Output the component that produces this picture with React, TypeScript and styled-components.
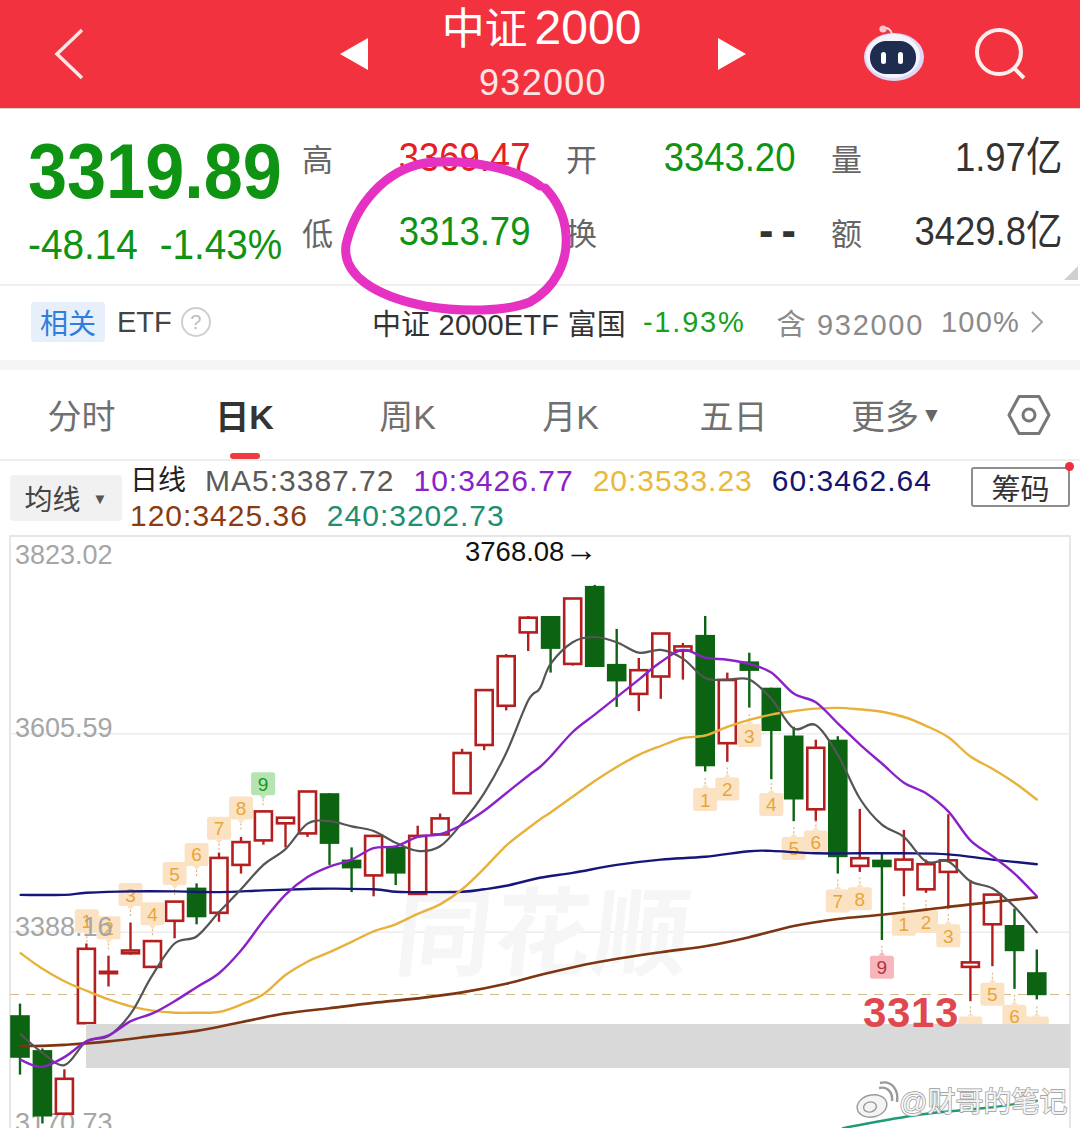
import React from 'react';
import styled, { createGlobalStyle } from 'styled-components';

const FONT = `"Liberation Sans", "Noto Sans CJK SC", sans-serif`;

const GlobalStyle = createGlobalStyle`
  html, body {
    margin: 0;
    padding: 0;
    background: #fff;
    font-family: ${FONT};
  }
  body {
    width: 1080px;
    height: 1128px;
    overflow: hidden;
  }
`;

const Page = styled.div`
  position: relative;
  width: 1080px;
  height: 1128px;
  overflow: hidden;
  background: #fff;
`;

/* header */
const Header = styled.header`
  height: 108px;
  background: #f2323e;
  border-bottom: 1px solid #d9d0d0;
  display: grid;
  grid-template-columns: 1fr auto 1fr;
  align-items: center;
  color: #fff;
`;

const BackSlot = styled.div`
  padding-left: 54px;
  display: flex;
  align-items: center;
`;

const TitleGroup = styled.div`
  width: 406px;
  height: 108px;
  margin-left: 6px;
  display: flex;
  align-items: center;
  justify-content: space-between;
`;

const TitleText = styled.div`
  align-self: flex-start;
  display: flex;
  flex-direction: column;
  align-items: center;
`;

const Title = styled.div`
  font-size: 43px;
  line-height: 56px;
  word-spacing: -5px;
  margin-left: -3px;
`;

const TitleNum = styled.span`
  font-size: 48px;
`;

const Code = styled.div`
  font-size: 36px;
  line-height: 40px;
  margin-top: 6px;
  letter-spacing: 1.3px;
  color: #fde4e4;
`;

const HeaderIcons = styled.div`
  display: flex;
  justify-content: flex-end;
  align-items: center;
  gap: 49px;
  padding-right: 52px;
`;

/* quote panel */
const QuotePanel = styled.section`
  position: relative;
  height: 177px;
  padding-left: 28px;
  display: flex;
  border-bottom: 2px solid #efefef;
  box-sizing: border-box;
`;

const PriceBlock = styled.div`
  width: 274px;
  flex: none;
  color: #0f9313;
  padding-top: 18px;
`;

const Num = styled.span<{ $size: number; $origin?: string; $bold?: boolean; $color?: string }>`
  display: inline-block;
  font-size: ${p => p.$size}px;
  line-height: 1;
  font-weight: ${p => (p.$bold ? 700 : 400)};
  color: ${p => p.$color || 'inherit'};
  transform: scaleX(0.9);
  transform-origin: ${p => p.$origin || 'right'} center;
  white-space: nowrap;
`;

const Dashes = styled(Num)`
  font-weight: 700;
  letter-spacing: 9px;
  margin-right: -9px;
`;

const BigPrice = styled.div`
  height: 88px;
  display: flex;
  align-items: center;
`;

const Change = styled.div`
  display: grid;
  grid-template-columns: 110px 144px;
  justify-items: start;
  margin-top: 8px;
  & > :last-child {
    justify-self: end;
  }
`;

const StatGrid = styled.div`
  display: grid;
  grid-template-columns: 228px 229px 231px;
  column-gap: 36px;
  grid-auto-rows: 74px;
  padding-top: 11px;
`;

const Stat = styled.div`
  display: flex;
  align-items: center;
  justify-content: space-between;
`;

const StatLabel = styled.span`
  font-size: 31px;
  color: #666;
`;

const Corner = styled.div`
  position: absolute;
  right: 2px;
  bottom: 4px;
  width: 0;
  height: 0;
  border-left: 14px solid transparent;
  border-bottom: 14px solid #cfcfcf;
`;

const Scribble = styled.svg`
  position: absolute;
  left: 0;
  top: 0;
  pointer-events: none;
`;

/* related etf */
const EtfRow = styled.section`
  height: 84px;
  box-sizing: border-box;
  padding: 0 36px 2px 31px;
  display: flex;
  align-items: center;
  justify-content: space-between;
  font-size: 29px;
  border-bottom: 10px solid #f5f5f5;
`;

const EtfLeft = styled.div`
  display: flex;
  align-items: center;
  color: #444;
`;

const Tag = styled.span`
  width: 74px;
  height: 40px;
  background: #e7effa;
  border-radius: 3px;
  color: #2f7de1;
  font-size: 28px;
  display: flex;
  align-items: center;
  justify-content: center;
  margin-right: 12px;
`;

const Help = styled.span`
  width: 26px;
  height: 26px;
  margin-left: 9px;
  border-radius: 50%;
  border: 2px solid #cfcfcf;
  color: #bdbdbd;
  font-size: 20px;
  display: flex;
  align-items: center;
  justify-content: center;
`;

const EtfRight = styled.div`
  display: flex;
  align-items: center;
`;

const EtfName = styled.span`
  color: #333;
  margin-right: 17px;
  letter-spacing: 0.2px;
`;

const EtfPct = styled.span`
  color: #16a01c;
  margin-right: 31px;
  letter-spacing: 1.8px;
`;

const EtfMeta = styled.span<{ $gap?: number; $spacing: number }>`
  color: #8a8a8a;
  letter-spacing: ${p => p.$spacing}px;
  margin-left: ${p => p.$gap || 0}px;
`;

const Chevron = styled.svg`
  margin-left: 10px;
`;

/* tabs */
const Tabs = styled.nav`
  height: 91px;
  display: grid;
  grid-template-columns: repeat(6, 163px) 1fr;
  align-items: center;
  border-bottom: 2px solid #eee;
  box-sizing: border-box;
`;

const Tab = styled.div<{ $active?: boolean }>`
  position: relative;
  height: 100%;
  display: flex;
  align-items: center;
  justify-content: center;
  font-size: 34px;
  font-weight: ${p => (p.$active ? 700 : 400)};
  color: ${p => (p.$active ? '#333' : '#707070')};
  &::after {
    content: '';
    display: ${p => (p.$active ? 'block' : 'none')};
    position: absolute;
    left: 67px;
    bottom: 0;
    width: 30px;
    height: 6px;
    border-radius: 3px;
    background: #ee3b40;
  }
`;

const Caret = styled.span`
  font-size: 21px;
  margin-left: 2px;
  color: #666;
`;

const GearSlot = styled.div`
  display: flex;
  justify-content: center;
`;

/* ma row */
const MaRow = styled.section`
  position: relative;
  height: 75px;
  display: flex;
  align-items: flex-start;
  padding-left: 10px;
  box-sizing: border-box;
`;

const MaButton = styled.div`
  width: 112px;
  height: 46px;
  margin-top: 14px;
  flex: none;
  background: #f1f1f1;
  border-radius: 4px;
  font-size: 28px;
  color: #444;
  display: flex;
  align-items: center;
  justify-content: center;
  gap: 12px;
`;

const MaCaret = styled.span`
  font-size: 15px;
  color: #555;
`;

const MaText = styled.div`
  width: 826px;
  margin-left: 8px;
  padding-top: 2px;
  display: flex;
  flex-wrap: wrap;
  column-gap: 19px;
  font-size: 30px;
  line-height: 35px;
  letter-spacing: 1px;
`;

const MaItem = styled.span<{ $color: string }>`
  color: ${p => p.$color};
  white-space: nowrap;
`;

const MaLabel = styled(MaItem)`
  font-size: 28px;
  letter-spacing: 0;
`;

const ChipButton = styled.div`
  position: relative;
  width: 99px;
  height: 40px;
  margin-top: 6px;
  margin-left: 15px;
  box-sizing: border-box;
  border: 2px solid #8d8d8d;
  border-radius: 3px;
  font-size: 29px;
  color: #333;
  display: flex;
  align-items: center;
  justify-content: center;
  &::after {
    content: '';
    position: absolute;
    right: -6px;
    top: -7px;
    width: 9px;
    height: 9px;
    border-radius: 50%;
    background: #ee2f3d;
  }
`;

/* chart */
const ChartWrap = styled.section`
  height: 592px;
`;

const ChartSvg = styled.svg`
  display: block;
  overflow: visible;
  font-family: ${FONT};
`;

const AxisLabel = styled.text`
  font-size: 27px;
  fill: #a6a6a6;
`;

const MarkerText = styled.text<{ $color: string }>`
  font-size: 19px;
  text-anchor: middle;
  fill: ${p => p.$color};
`;

const Watermark = styled.text`
  font-size: 96px;
  font-weight: 700;
  fill: #f6f6f6;
  letter-spacing: 3px;
`;

const LowNote = styled.text`
  font-size: 42px;
  font-weight: 700;
  fill: #e0484f;
  letter-spacing: 0.6px;
`;

const PeakNote = styled.text`
  font-size: 27.5px;
  fill: #111;
`;

const PeakArrow = styled.tspan`
  font-size: 33px;
`;

const Credit = styled.text`
  font-size: 28px;
  fill: #f4f4f4;
  stroke: #9a9a9a;
  stroke-width: 1.4px;
  paint-order: stroke;
`;

/* reference chart units: half of the plot is 1568 wide */
const HALF = 1568;
const px = (x: number) => +(x / 2.904).toFixed(1);
const py = (y: number) => +(44 + y / 2.861).toFixed(1);

type Candle = [number, number, number, number, number, 'r' | 'g'];

const leftCandles: Candle[] = [
  [58, 1212, 1415, 1245, 1367, 'g'],
  [123, 1340, 1555, 1345, 1535, 'g'],
  [187, 1400, 1530, 1427, 1527, 'r'],
  [251, 1040, 1268, 1055, 1268, 'r'],
  [315, 1075, 1163, 1121, 1125, 'r'],
  [379, 980, 1072, 1060, 1068, 'r'],
  [443, 1033, 1110, 1033, 1107, 'r'],
  [507, 920, 1025, 920, 975, 'r'],
  [571, 868, 985, 880, 965, 'g'],
  [636, 780, 978, 795, 952, 'r'],
  [700, 735, 840, 750, 815, 'r'],
  [765, 660, 757, 662, 745, 'r'],
  [829, 680, 765, 680, 696, 'r'],
  [893, 605, 735, 605, 725, 'r'],
  [957, 610, 815, 610, 755, 'g'],
  [1021, 765, 893, 800, 825, 'g'],
  [1085, 732, 905, 732, 845, 'r'],
  [1149, 763, 873, 763, 840, 'g'],
  [1213, 703, 898, 732, 898, 'r'],
  [1278, 668, 728, 682, 728, 'r'],
  [1342, 483, 610, 495, 610, 'r'],
  [1406, 315, 487, 315, 472, 'r'],
  [1470, 212, 373, 218, 360, 'r'],
  [1534, 103, 203, 108, 150, 'r'],
];

const rightCandles: Candle[] = [
  [31, 103, 265, 103, 197, 'g'],
  [95, 53, 245, 53, 240, 'r'],
  [159, 14, 249, 17, 249, 'g'],
  [223, 140, 363, 240, 290, 'g'],
  [287, 223, 375, 258, 326, 'r'],
  [351, 153, 340, 153, 276, 'r'],
  [415, 180, 285, 190, 202, 'r'],
  [480, 103, 548, 157, 533, 'g'],
  [544, 265, 520, 286, 467, 'r'],
  [608, 208, 365, 233, 260, 'g'],
  [672, 308, 570, 308, 432, 'g'],
  [737, 420, 690, 445, 628, 'g'],
  [801, 457, 690, 480, 656, 'r'],
  [865, 447, 840, 457, 793, 'g'],
  [929, 655, 835, 796, 818, 'r'],
  [993, 780, 1030, 800, 822, 'g'],
  [1057, 715, 905, 800, 828, 'r'],
  [1121, 800, 895, 813, 885, 'r'],
  [1186, 670, 940, 802, 835, 'r'],
  [1250, 858, 1205, 1094, 1107, 'r'],
  [1314, 900, 1105, 900, 985, 'r'],
  [1378, 940, 1170, 987, 1062, 'g'],
  [1443, 1057, 1200, 1122, 1188, 'g'],
];

const candles: Candle[] = [
  ...leftCandles,
  ...rightCandles.map(([x, ...rest]) => [x + HALF, ...rest] as Candle),
];

type Pt = [number, number];
const joinHalves = (left: Pt[], right: Pt[]): Pt[] => [
  ...left,
  ...right.map(([x, y]) => [x + HALF, y] as Pt),
];

const ma5 = joinHalves(
  [[60, 1300], [120, 1350], [187, 1388], [251, 1320], [315, 1305], [380, 1240], [440, 1135], [507, 1040], [571, 1020], [636, 950], [700, 885], [765, 815], [829, 770], [893, 697], [957, 690], [1021, 705], [1085, 718], [1149, 752], [1213, 775], [1278, 762], [1342, 695], [1406, 610], [1470, 495], [1534, 345], [1568, 310]],
  [[31, 240], [95, 178], [159, 163], [223, 178], [287, 208], [351, 200], [415, 225], [480, 280], [544, 285], [608, 285], [672, 340], [737, 425], [801, 415], [865, 500], [929, 625], [993, 700], [1057, 735], [1121, 805], [1186, 805], [1250, 862], [1314, 882], [1378, 935], [1443, 1008]],
);

const ma10 = joinHalves(
  [[60, 1373], [120, 1393], [187, 1365], [251, 1320], [315, 1303], [380, 1262], [443, 1240], [507, 1205], [571, 1165], [636, 1125], [700, 1060], [765, 975], [829, 900], [893, 850], [957, 820], [1021, 800], [1085, 767], [1149, 762], [1213, 735], [1278, 727], [1342, 700], [1406, 660], [1470, 610], [1534, 560], [1568, 535]],
  [[31, 505], [95, 435], [159, 385], [223, 335], [287, 285], [351, 235], [415, 200], [480, 222], [544, 228], [608, 240], [672, 265], [737, 325], [801, 350], [865, 410], [929, 470], [993, 525], [1057, 580], [1121, 610], [1186, 662], [1250, 745], [1314, 790], [1378, 840], [1443, 905]],
);

const ma20 = joinHalves(
  [[60, 1068], [120, 1110], [187, 1148], [251, 1175], [315, 1200], [380, 1220], [443, 1232], [507, 1238], [571, 1238], [636, 1236], [700, 1215], [765, 1185], [829, 1130], [893, 1092], [957, 1065], [1021, 1035], [1085, 1005], [1149, 985], [1213, 955], [1278, 928], [1342, 885], [1406, 825], [1470, 760], [1534, 710], [1568, 685]],
  [[31, 665], [95, 620], [159, 575], [223, 535], [287, 500], [351, 475], [415, 452], [480, 445], [544, 420], [608, 400], [672, 385], [737, 375], [801, 368], [865, 366], [929, 370], [993, 377], [1057, 392], [1121, 417], [1186, 450], [1250, 505], [1314, 540], [1378, 580], [1443, 628]],
);

const ma60 = joinHalves(
  [[60, 901], [187, 901], [251, 895], [380, 891], [507, 891], [636, 893], [765, 888], [893, 884], [957, 883], [1085, 885], [1149, 892], [1213, 893], [1342, 892], [1406, 885], [1470, 875], [1568, 852]],
  [[95, 838], [223, 815], [351, 800], [480, 792], [608, 776], [672, 775], [801, 782], [929, 782], [1057, 782], [1186, 785], [1314, 800], [1443, 813]],
);

const ma120 = joinHalves(
  [[60, 1333], [120, 1333], [187, 1330], [315, 1320], [443, 1305], [571, 1290], [700, 1265], [829, 1240], [957, 1225], [1085, 1210], [1213, 1197], [1342, 1180], [1470, 1155], [1568, 1130]],
  [[159, 1095], [351, 1065], [480, 1048], [608, 1022], [737, 990], [865, 970], [993, 958], [1121, 943], [1250, 928], [1443, 908]],
);

const ma240 = joinHalves([], [[880, 1568], [1100, 1530], [1300, 1510], [1443, 1490]]);

const maLines: { pts: Pt[]; color: string; width: number }[] = [
  { pts: ma60, color: '#15157a', width: 2.4 },
  { pts: ma240, color: '#1f9b79', width: 2.4 },
  { pts: ma120, color: '#7d3512', width: 2.6 },
  { pts: ma20, color: '#e8b13a', width: 2.4 },
  { pts: ma5, color: '#555', width: 2.2 },
  { pts: ma10, color: '#8a22c8', width: 2.4 },
];

type Tone = 'amber' | 'green' | 'pink';
const TONES: Record<Tone, { fill: string; text: string }> = {
  amber: { fill: '#fbe2c2', text: '#e8a63a' },
  green: { fill: '#b6e3b2', text: '#149a1c' },
  pink: { fill: '#f6b6bc', text: '#b5323c' },
};

type MarkerData = [number, number, string, 'up' | 'down', Tone?];

const markers: MarkerData[] = [
  [252, 975, '1', 'up'],
  [315, 995, '2', 'up'],
  [379, 900, '3', 'up'],
  [443, 955, '4', 'up'],
  [507, 840, '5', 'up'],
  [571, 785, '6', 'up'],
  [636, 710, '7', 'up'],
  [700, 652, '8', 'up'],
  [764, 583, '9', 'up', 'green'],
  [480 + HALF, 628, '1', 'down'],
  [544 + HALF, 598, '2', 'down'],
  [608 + HALF, 445, '3', 'down'],
  [672 + HALF, 642, '4', 'down'],
  [737 + HALF, 768, '5', 'down'],
  [801 + HALF, 750, '6', 'down'],
  [865 + HALF, 918, '7', 'down'],
  [929 + HALF, 912, '8', 'down'],
  [993 + HALF, 1108, '9', 'down', 'pink'],
  [1057 + HALF, 985, '1', 'down'],
  [1121 + HALF, 977, '2', 'down'],
  [1186 + HALF, 1018, '3', 'down'],
  [1250 + HALF, 1282, '', 'down'],
  [1314 + HALF, 1185, '5', 'down'],
  [1378 + HALF, 1248, '6', 'down'],
  [1443 + HALF, 1282, '', 'down'],
];

const CandleMark = ({ c }: { c: Candle }) => {
  const [x, high, low, top, bottom, kind] = c;
  const color = kind === 'r' ? '#b31f1f' : '#0c6412';
  const cx = px(x);
  return (
    <g>
      <line x1={cx} x2={cx} y1={py(high)} y2={py(low)} stroke={color} strokeWidth={2.4} />
      {kind === 'r' ? (
        <rect x={cx - 8.5} y={py(top)} width={17} height={Math.max(py(bottom) - py(top), 1)} fill="#fff" stroke={color} strokeWidth={2.6} />
      ) : (
        <rect x={cx - 9.8} y={py(top)} width={19.6} height={py(bottom) - py(top)} fill={color} />
      )}
    </g>
  );
};

const Marker = ({ m }: { m: MarkerData }) => {
  const [x, y, label, dir, tone = 'amber'] = m;
  const cx = px(x);
  const cy = py(y);
  const t = TONES[tone];
  const sign = dir === 'up' ? 1 : -1;
  const tip = cy + sign * 15.5;
  return (
    <g>
      <line x1={cx} x2={cx} y1={tip} y2={tip + sign * 6} stroke="#d8b98a" strokeWidth={1.2} strokeDasharray="2 2" />
      <rect x={cx - 12} y={cy - 11.5} width={24} height={23} rx={2.5} fill={t.fill} />
      <polygon points={`${cx - 3.5},${cy + sign * 11.5} ${cx + 3.5},${cy + sign * 11.5} ${cx},${tip}`} fill={t.fill} />
      <MarkerText x={cx} y={cy + 7} $color={t.text}>{label}</MarkerText>
    </g>
  );
};

// catmull-rom through the sampled points, the averages read as soft curves
const toSmoothPath = (pts: Pt[]) => {
  const p = pts.map(([x, y]) => [px(x), py(y)] as Pt);
  let d = `M${p[0][0]} ${p[0][1]}`;
  for (let i = 0; i < p.length - 1; i++) {
    const a = p[Math.max(i - 1, 0)];
    const b = p[i];
    const c = p[i + 1];
    const e = p[Math.min(i + 2, p.length - 1)];
    const c1x = +(b[0] + (c[0] - a[0]) / 6).toFixed(1);
    const c1y = +(b[1] + (c[1] - a[1]) / 6).toFixed(1);
    const c2x = +(c[0] - (e[0] - b[0]) / 6).toFixed(1);
    const c2y = +(c[1] - (e[1] - b[1]) / 6).toFixed(1);
    d += ` C${c1x} ${c1y} ${c2x} ${c2y} ${c[0]} ${c[1]}`;
  }
  return d;
};

const Chart = () => (
  <ChartWrap>
    <ChartSvg width={1080} height={592} viewBox="0 0 1080 592">
      <rect x={10} y={0} width={1060} height={600} fill="#fff" stroke="#e6e6e6" strokeWidth={2} />
      <line x1={10} x2={1070} y1={py(440)} y2={py(440)} stroke="#ececec" strokeWidth={1.5} />
      <line x1={10} x2={1070} y1={py(1008)} y2={py(1008)} stroke="#ececec" strokeWidth={1.5} />
      <Watermark x={392} y={432} transform="skewX(-6) translate(46 0)">同花顺</Watermark>
      <line x1={10} x2={1070} y1={py(1186)} y2={py(1186)} stroke="#cdbb8e" strokeWidth={1} strokeDasharray="9 7" />

      <AxisLabel x={15} y={28}>3823.02</AxisLabel>
      <AxisLabel x={15} y={201}>3605.59</AxisLabel>
      <AxisLabel x={15} y={596}>3170.73</AxisLabel>
      <PeakNote x={465} y={25}>3768.08<PeakArrow>→</PeakArrow></PeakNote>

      {candles.map((c, i) => <CandleMark key={i} c={c} />)}
      {markers.map((m, i) => <Marker key={i} m={m} />)}
      <AxisLabel x={15} y={400}>3388.16</AxisLabel>

      <rect x={86} y={488} width={984} height={44} fill="#d9d9d9" />
      <LowNote x={863} y={491}>3313</LowNote>

      {maLines.map((l, i) => (
        <path key={i} d={toSmoothPath(l.pts)} fill="none" stroke={l.color} strokeWidth={l.width} strokeLinecap="round" />
      ))}

      <g fill="#f4f4f4" stroke="#9a9a9a" strokeWidth={1.4}>
        <ellipse cx={872} cy={570} rx={15} ry={11} transform="rotate(-12 872 570)" />
        <ellipse cx={870} cy={571} rx={6.5} ry={5} transform="rotate(-12 870 571)" />
        <path d="M879 552 C887 550 893 556 892 565 M880 547 C891 544 899 553 897 566" fill="none" strokeWidth={2.4} />
      </g>
      <Credit x={899} y={576}>@财哥的笔记</Credit>
    </ChartSvg>
  </ChartWrap>
);

const Robot = () => (
  <svg width={62} height={58} viewBox="0 0 62 58">
    <path d="M20 4 C24 2 28 4 29 9" fill="none" stroke="#f7d6dc" strokeWidth={2.2} />
    <circle cx={20} cy={4} r={3.6} fill="#f9c6cf" />
    <ellipse cx={31} cy={32} rx={30} ry={24} fill="#ddd8f6" />
    <ellipse cx={30} cy={31} rx={27} ry={22} fill="#f5f3fd" />
    <rect x={7} y={16} width={46} height={33} rx={16} fill="#1e2c4f" />
    <rect x={18} y={27} width={5} height={12} rx={2.5} fill="#fff" />
    <rect x={35} y={27} width={5} height={12} rx={2.5} fill="#fff" />
  </svg>
);

const App = () => (
  <Page>
    <GlobalStyle />
    <Header>
      <BackSlot>
        <svg width={32} height={54} viewBox="0 0 32 54">
          <path d="M28 3 L3 27 L28 51" fill="none" stroke="#fbe6e6" strokeWidth={3.5} />
        </svg>
      </BackSlot>
      <TitleGroup>
        <svg width={28} height={32} viewBox="0 0 28 32"><polygon points="28,0 0,16 28,32" fill="#fff" /></svg>
        <TitleText>
          <Title>中证 <TitleNum>2000</TitleNum></Title>
          <Code>932000</Code>
        </TitleText>
        <svg width={28} height={32} viewBox="0 0 28 32"><polygon points="0,0 28,16 0,32" fill="#fff" /></svg>
      </TitleGroup>
      <HeaderIcons>
        <Robot />
        <svg width={54} height={54} viewBox="0 0 54 54">
          <circle cx={25} cy={25} r={22} fill="none" stroke="#fdeeee" strokeWidth={4} />
          <path d="M40 41 L50 51" stroke="#fdeeee" strokeWidth={4} />
        </svg>
      </HeaderIcons>
    </Header>

    <QuotePanel>
      <PriceBlock>
        <BigPrice><Num $size={78} $bold $origin="left">3319.89</Num></BigPrice>
        <Change>
          <Num $size={43} $origin="left">-48.14</Num>
          <Num $size={43}>-1.43%</Num>
        </Change>
      </PriceBlock>
      <StatGrid>
        <Stat><StatLabel>高</StatLabel><Num $size={40.5} $color="#e5201f">3369.47</Num></Stat>
        <Stat><StatLabel>开</StatLabel><Num $size={40.5} $color="#0f9313">3343.20</Num></Stat>
        <Stat><StatLabel>量</StatLabel><Num $size={40.5} $color="#333">1.97亿</Num></Stat>
        <Stat><StatLabel>低</StatLabel><Num $size={40.5} $color="#0f9313">3313.79</Num></Stat>
        <Stat><StatLabel>换</StatLabel><Dashes $size={48} $color="#333">--</Dashes></Stat>
        <Stat><StatLabel>额</StatLabel><Num $size={40.5} $color="#333">3429.8亿</Num></Stat>
      </StatGrid>
      <Corner />
    </QuotePanel>

    <EtfRow>
      <EtfLeft>
        <Tag>相关</Tag>
        ETF
        <Help>?</Help>
      </EtfLeft>
      <EtfRight>
        <EtfName>中证 2000ETF 富国</EtfName>
        <EtfPct>-1.93%</EtfPct>
        <EtfMeta $spacing={1.7}>含 932000</EtfMeta>
        <EtfMeta $spacing={1.2} $gap={17}>100%</EtfMeta>
        <Chevron width={14} height={24} viewBox="0 0 14 24">
          <path d="M2 2 L12 12 L2 22" fill="none" stroke="#a0a0a0" strokeWidth={2} />
        </Chevron>
      </EtfRight>
    </EtfRow>

    <Tabs>
      <Tab>分时</Tab>
      <Tab $active>日K</Tab>
      <Tab>周K</Tab>
      <Tab>月K</Tab>
      <Tab>五日</Tab>
      <Tab>更多<Caret>▼</Caret></Tab>
      <GearSlot>
        <svg width={44} height={42} viewBox="0 0 44 42">
          <polygon points="12,2.5 32,2.5 42,21 32,39.5 12,39.5 2,21" fill="none" stroke="#777" strokeWidth={3} strokeLinejoin="round" />
          <circle cx={22} cy={21} r={6} fill="none" stroke="#777" strokeWidth={3} />
        </svg>
      </GearSlot>
    </Tabs>

    <MaRow>
      <MaButton>均线<MaCaret>▼</MaCaret></MaButton>
      <MaText>
        <MaLabel $color="#222">日线</MaLabel>
        <MaItem $color="#5a5a5a">MA5:3387.72</MaItem>
        <MaItem $color="#8a22c8">10:3426.77</MaItem>
        <MaItem $color="#e8b93a">20:3533.23</MaItem>
        <MaItem $color="#15156f">60:3462.64</MaItem>
        <MaItem $color="#8a3c10">120:3425.36</MaItem>
        <MaItem $color="#1f8f70">240:3202.73</MaItem>
      </MaText>
      <ChipButton>筹码</ChipButton>
    </MaRow>

    <Chart />

    <Scribble width={1080} height={360} viewBox="0 0 1080 360">
      <path
        d="M540 186 C520 170 470 158 425 163 C385 170 355 205 346 245 C342 275 375 296 425 306 C460 312 505 312 530 302 C555 288 568 262 566 235 C565 215 555 198 545 188"
        fill="none"
        stroke="#e632c2"
        strokeWidth={9}
        strokeLinecap="round"
      />
    </Scribble>
  </Page>
);

export default App;
